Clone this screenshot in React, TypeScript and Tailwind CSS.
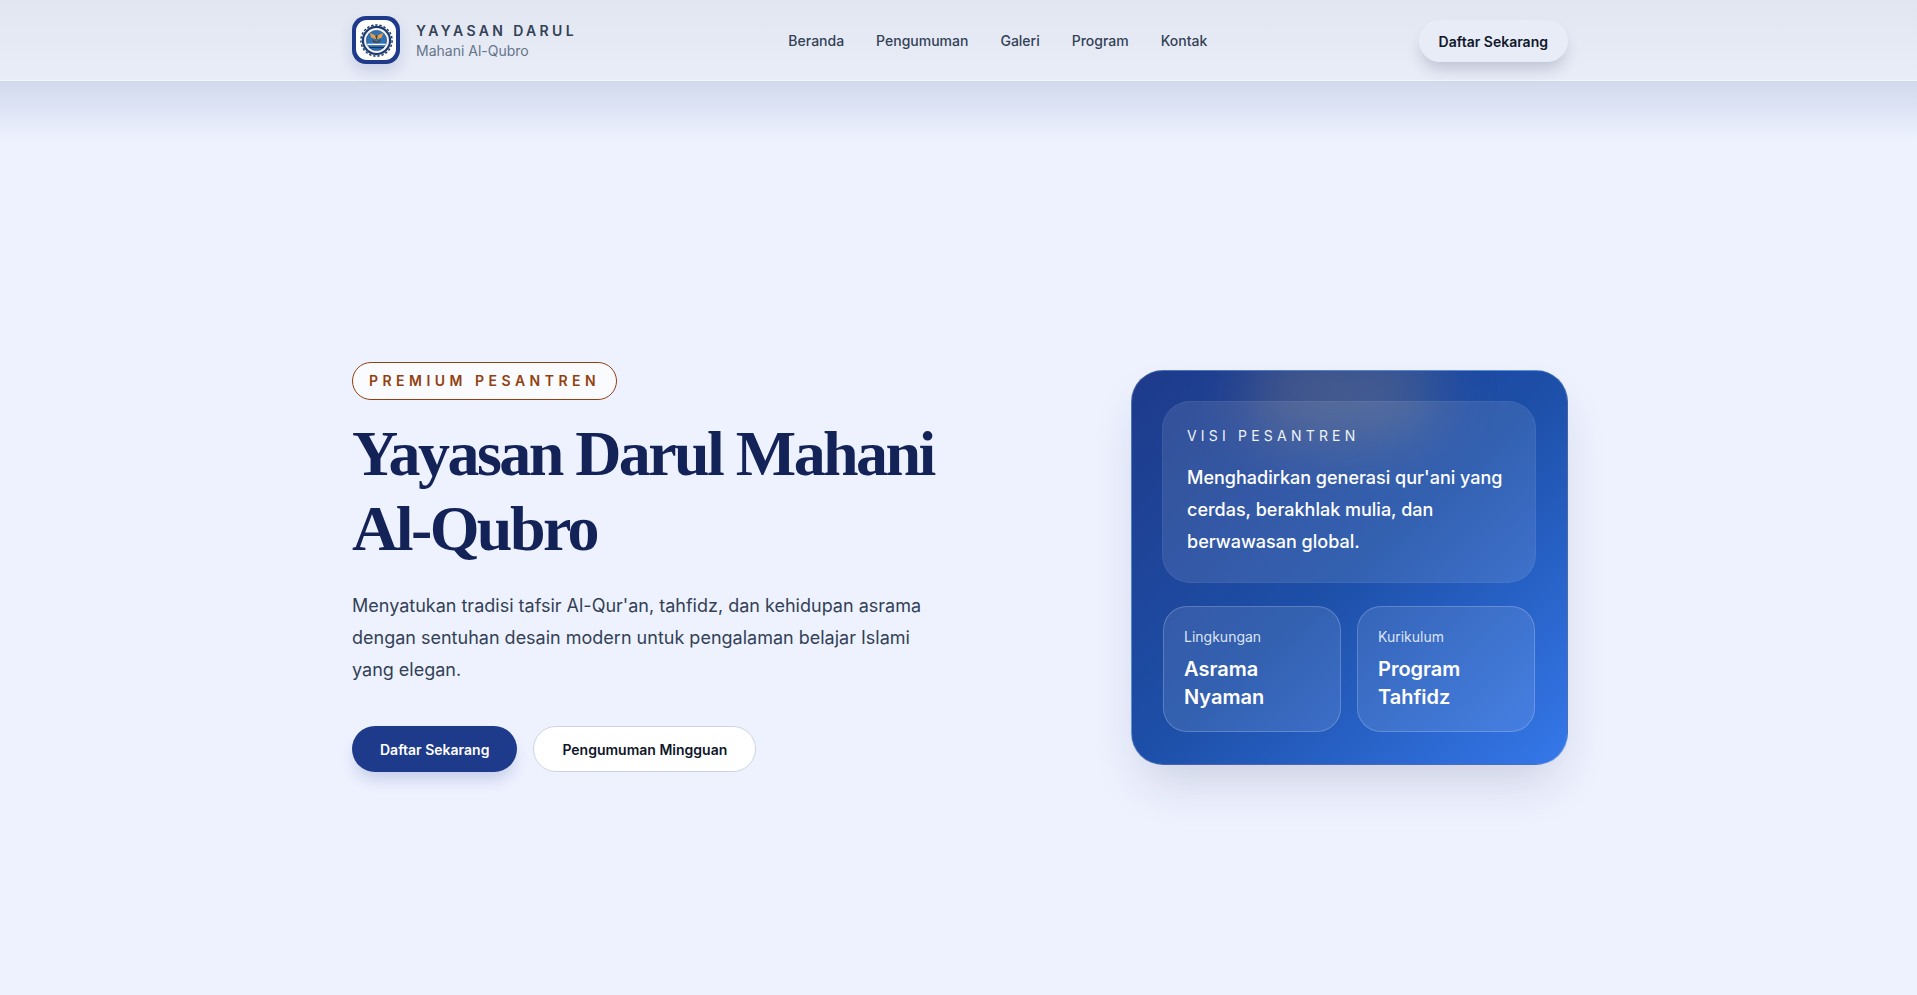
const navLinks = ["Beranda", "Pengumuman", "Galeri", "Program", "Kontak"];

const stats = [
  { label: "Lingkungan", lines: ["Asrama", "Nyaman"] },
  { label: "Kurikulum", lines: ["Program", "Tahfidz"] },
];

const Logo = () => (
  <div className="-mt-[2px] h-[48px] w-[48px] rounded-[14px] bg-[#1e3a8a] p-[4px] shadow-[0_8px_14px_rgba(30,58,138,0.14)]">
    <div className="flex h-full w-full items-center justify-center rounded-[11px] bg-white">
      <svg viewBox="0 0 36 36" className="h-[33px] w-[33px]">
        {/* emblem: scalloped ring, white band, blue disc with the bird on top */}
        <circle cx="18" cy="18" r="16" fill="#1e3a6e" />
        <circle cx="18" cy="18" r="17" fill="none" stroke="#1e3a6e" strokeWidth="1.6" strokeDasharray="2.6 2" />
        <circle cx="18" cy="18" r="13.6" fill="#f2f5fa" />
        <circle cx="18" cy="18" r="11" fill="#2f72b5" stroke="#1e3a6e" strokeWidth="0.7" />
        <path d="M10.5 9.5l7.5 3.5 7.5-3.5-2 5.5-5.5 1.5-5.5-1.5z" fill="#e3a045" />
        <path d="M13 16.5l5 3.5 5-3.5-1.5 3-3.5 1.5-3.5-1.5z" fill="#5b3a1a" />
        <path d="M16.5 12.5h3l-1.5 5z" fill="#5b3a1a" />
        <rect x="8" y="21.5" width="20" height="1.5" fill="#ffffff" />
        <rect x="10" y="25" width="16" height="1.3" fill="#16335f" />
      </svg>
    </div>
  </div>
);

export default function App() {
  return (
    <div className="min-h-[995px] bg-[#eef2ff] font-['Inter',sans-serif]">
      <header className="h-[81px] border-b border-[#f4f6fc] bg-gradient-to-b from-[#e2e6f1] to-[#e9edf8]">
        <div className="ml-[352px] flex h-[80px] w-[1216px] items-center justify-between pt-[2px]">
          <div className="flex items-center gap-[16px]">
            <Logo />
            <div>
              <p className="text-[14px] leading-[20px] font-semibold tracking-[0.24em] text-[#334155]">YAYASAN DARUL</p>
              <p className="text-[14px] leading-[20px] text-[#64748b]">Mahani Al-Qubro</p>
            </div>
          </div>
          <nav className="flex items-center gap-[32px]">
            {navLinks.map((link) => (
              <a key={link} className="text-[14px] leading-[20px] font-medium text-[#334155]">
                {link}
              </a>
            ))}
          </nav>
          <button className="h-[42px] rounded-full bg-[#e8ecf7] px-[20px] text-[14px] font-semibold text-[#0f172a] shadow-[0_10px_15px_-3px_rgba(30,41,80,0.2)]">
            Daftar Sekarang
          </button>
        </div>
      </header>

      <div className="h-[60px] bg-gradient-to-b from-[#d1d9ec] to-[#eef2ff]" />

      <main className="ml-[352px] flex w-[1216px] items-center justify-between pt-[221px]">
        <div className="w-[600px]">
          <span className="inline-block rounded-full border border-[#92400e] bg-white/70 px-[16px] py-[8px] text-[14px] leading-[20px] font-semibold tracking-[0.32em] text-[#92400e]">
            PREMIUM PESANTREN
          </span>
          <h1 className="mt-[16px] text-[64px] leading-[75px] font-bold tracking-[-0.04em] whitespace-nowrap text-[#132257] font-['Liberation_Serif',serif]">
            Yayasan Darul Mahani
            <br />
            Al-Qubro
          </h1>
          <p className="mt-[24px] w-[576px] text-[18px] leading-[32px] text-[#334155]">
            Menyatukan tradisi tafsir Al-Qur'an, tahfidz, dan kehidupan asrama dengan sentuhan desain modern untuk
            pengalaman belajar Islami yang elegan.
          </p>
          <div className="mt-[40px] flex gap-[16px]">
            <button className="h-[46px] rounded-full bg-[#1e3a8a] px-[28px] text-[14px] font-semibold text-white shadow-[0_10px_15px_-3px_rgba(30,58,138,0.2)]">
              Daftar Sekarang
            </button>
            <button className="h-[46px] rounded-full border border-[#cbd5e1] bg-white px-[28px] text-[14px] font-semibold text-[#0f172a]">
              Pengumuman Mingguan
            </button>
          </div>
        </div>

        <div className="relative w-[437px] overflow-hidden rounded-[32px] border border-white/20 bg-gradient-to-br from-[#1e3a8a] via-[#1d4fa8] to-[#3578ea] py-[30px] pr-[31px] pl-[30px] shadow-[0_25px_50px_-12px_rgba(30,41,80,0.18)]">
          <div className="absolute top-[-30px] left-[115px] h-[100px] w-[190px] rounded-full bg-[#b89a6a]/25 blur-[30px]" />
          <div className="relative rounded-[28px] border border-white/5 bg-white/10 px-[24px] py-[24px] text-white">
            <p className="text-[14px] leading-[20px] tracking-[0.3em] text-[#eef2fb]">VISI PESANTREN</p>
            <p className="mt-[16px] text-[18px] leading-[32px] font-medium">
              Menghadirkan generasi qur'ani yang cerdas, berakhlak mulia, dan berwawasan global.
            </p>
          </div>
          <div className="relative mt-[23px] grid grid-cols-2 gap-[16px] px-px pb-[2px]">
            {stats.map((stat) => (
              <div key={stat.label} className="rounded-[24px] border border-white/20 bg-white/10 p-[20px] text-white">
                <p className="text-[14px] leading-[20px] text-[#dbe4f5]">{stat.label}</p>
                <p className="mt-[8px] text-[20px] leading-[28px] font-semibold">
                  {stat.lines[0]}
                  <br />
                  {stat.lines[1]}
                </p>
              </div>
            ))}
          </div>
        </div>
      </main>
    </div>
  );
}
